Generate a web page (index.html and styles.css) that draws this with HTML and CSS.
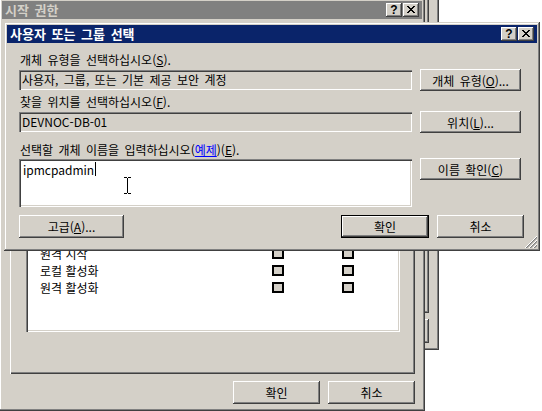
FILE: index.html
```html
<!DOCTYPE html>
<html lang="ko">
<head>
<meta charset="utf-8">
<title>사용자 또는 그룹 선택</title>
<link rel="stylesheet" href="styles.css">
</head>
<body>
<div class="desktop">
  <div class="win win-c">
    <div class="c-part c-top"></div>
    <div class="c-part c-bottom"></div>
  </div>

  <div class="win win-a">
    <div class="titlebar inactive">
      <span class="title">시작 권한</span>
      <div class="tbtns">
        <span class="tbtn help">?</span>
        <span class="tbtn close"><svg width="8" height="7" viewBox="0 0 8 7" shape-rendering="crispEdges"><path d="M0 0h2v1H0zM6 0h2v1H6zM1 1h2v1H1zM5 1h2v1H5zM2 2h4v1H2zM3 3h2v1H3zM2 4h4v1H2zM1 5h2v1H1zM5 5h2v1H5zM0 6h2v1H0zM6 6h2v1H6z" fill="#000"/></svg></span>
      </div>
    </div>
    <div class="a-body">
      <div class="panel">
        <div class="listbox">
          <div class="lrow"><span>원격 시작</span><span class="chk"></span><span class="chk"></span></div>
          <div class="lrow"><span>로컬 활성화</span><span class="chk"></span><span class="chk"></span></div>
          <div class="lrow"><span>원격 활성화</span><span class="chk"></span><span class="chk"></span></div>
        </div>
      </div>
      <div class="a-buttons">
        <button class="btn btn-a">확인</button>
        <button class="btn btn-a">취소</button>
      </div>
    </div>
  </div>

  <div class="win dlg">
    <div class="titlebar active">
      <span class="title">사용자 또는 그룹 선택</span>
      <div class="tbtns">
        <span class="tbtn help">?</span>
        <span class="tbtn close"><svg width="8" height="7" viewBox="0 0 8 7" shape-rendering="crispEdges"><path d="M0 0h2v1H0zM6 0h2v1H6zM1 1h2v1H1zM5 1h2v1H5zM2 2h4v1H2zM3 3h2v1H3zM2 4h4v1H2zM1 5h2v1H1zM5 5h2v1H5zM0 6h2v1H0zM6 6h2v1H6z" fill="#000"/></svg></span>
      </div>
    </div>
    <div class="dlg-body">
      <div class="label l1">개체 유형을 선택하십시오(<u>S</u>).</div>
      <div class="row r1">
        <div class="field ro">사용자, 그룹, 또는 기본 제공 보안 계정</div>
        <button class="btn side">개체 유형(<u>O</u>)...</button>
      </div>
      <div class="label l2">찾을 위치를 선택하십시오(<u>F</u>).</div>
      <div class="row r2">
        <div class="field ro">DEVNOC-DB-01</div>
        <button class="btn side">위치(<u>L</u>)...</button>
      </div>
      <div class="label l3">선택할 개체 이름을 입력하십시오(<a class="link">예제</a>)(<u>E</u>).</div>
      <div class="row r3">
        <div class="field area"><span class="typed">ipmcpadmin</span><span class="caret"></span></div>
        <button class="btn side">이름 확인(<u>C</u>)</button>
      </div>
      <div class="row bottom">
        <button class="btn adv">고급(<u>A</u>)...</button>
        <button class="btn ok default">확인</button>
        <button class="btn cancel">취소</button>
      </div>
    </div>
    <svg class="grip" width="12" height="12" viewBox="0 0 12 12"><path d="M12 1L1 12M12 5L5 12M12 9L9 12" stroke="#808080" stroke-width="1.4"/><path d="M12 0L0 12M12 4L4 12M12 8L8 12" stroke="#fff" stroke-width="1"/></svg>
  </div>

  <svg class="ibeam" width="9" height="17" viewBox="0 0 9 17" shape-rendering="crispEdges"><path d="M1 0h3v1H1zM5 0h3v1H5zM4 1h1v15H4zM1 16h3v1H1zM5 16h3v1H5z" fill="#000"/></svg>
</div>
</body>
</html>
```

FILE: styles.css
```css
* { box-sizing: border-box; }

body {
  margin: 0;
  background: #fff;
  font-family: "Noto Sans CJK KR", "Liberation Sans", sans-serif;
  font-size: 12px;
  color: #000;
}

.desktop {
  position: relative;
  width: 542px;
  height: 411px;
  overflow: hidden;
  background: #fff;
}

.win {
  position: absolute;
  background: #d4d0c8;
  padding: 3px;
  display: flex;
  flex-direction: column;
  box-shadow: inset -1px -1px #404040, inset 1px 1px #d4d0c8,
              inset -2px -2px #808080, inset 2px 2px #fff;
}

/* window peeking at the right */
.win-c {
  left: 395px;
  top: -10px;
  width: 44px;
  height: 360px;
  padding: 3px 10px 3px 3px;
}
.c-part {
  background: #d4d0c8;
  box-shadow: inset -1px -1px #404040, inset 1px 1px #fff, inset -2px -2px #808080;
}
.c-top { height: 320px; }
.c-bottom { height: 24px; margin-top: 6px; }

/* back window */
.win-a {
  left: -1px;
  top: -2px;
  width: 426px;
  height: 413px;
}

.dlg {
  left: 4px;
  top: 22px;
  width: 536px;
  height: 229px;
}

.titlebar {
  height: 18px;
  flex: none;
  display: flex;
  align-items: center;
  padding: 0 3px 0 3px;
}
.titlebar.active { background: #0a246a; color: #fff; }
.titlebar.inactive { background: #808080; color: #d4d0c8; }
.titlebar .title {
  font-weight: bold;
  font-size: 13px;
  line-height: 18px;
  word-spacing: 2px;
}
.tbtns {
  margin-left: auto;
  display: flex;
  gap: 1px;
}
.tbtn {
  width: 16px;
  height: 14px;
  background: #d4d0c8;
  display: flex;
  align-items: center;
  justify-content: center;
  color: #000;
  box-shadow: inset -1px -1px #404040, inset 1px 1px #fff,
              inset -2px -2px #808080;
}
.tbtn.help {
  font-family: "Liberation Sans", sans-serif;
  font-weight: bold;
  font-size: 12px;
  line-height: 14px;
  padding-bottom: 1px;
}
.tbtn.close svg { display: block; margin-top: -1px; }

/* back window body */
.a-body {
  flex: 1;
  display: flex;
  flex-direction: column;
  padding: 11px 7px 0 8px;
}
.panel {
  width: 405px;
  height: 344px;
  padding: 166px 0 0 16px;
  box-shadow: inset 1px 1px #fff, inset -1px -1px #404040, inset -2px -2px #808080;
}
.listbox {
  width: 374px;
  height: 136px;
  background: #fff;
  padding: 49px 0 0 14px;
  box-shadow: inset 1px 1px #808080, inset 2px 2px #404040,
              inset -1px -1px #fff, inset -2px -2px #d4d0c8;
}
.lrow {
  display: grid;
  grid-template-columns: 232px 70px 1fr;
  height: 17px;
  align-items: center;
  line-height: 17px;
}
.chk {
  width: 12px;
  height: 11px;
  background: #d4d0c8;
  border: 2px solid #000;
}
.a-buttons {
  display: flex;
  justify-content: flex-end;
  gap: 8px;
  margin-top: 7px;
}
.btn-a { width: 87px; }

/* buttons */
.btn {
  height: 23px;
  border: none;
  padding: 0;
  margin: 0;
  background: #d4d0c8;
  color: #000;
  font: inherit;
  font-size: 12px;
  word-spacing: 2px;
  box-shadow: inset -1px -1px #404040, inset 1px 1px #fff,
              inset -2px -2px #808080, inset 2px 2px #d4d0c8;
}
.btn.default {
  box-shadow: inset 0 0 0 1px #000, inset -2px -2px #404040, inset 2px 2px #fff,
              inset -3px -3px #808080;
}

/* dialog body */
.dlg-body {
  flex: 1;
  display: flex;
  flex-direction: column;
  padding: 0 16px 0 12px;
}
.label {
  line-height: 16px;
  height: 16px;
  padding-left: 1px;
  word-spacing: 2px;
  white-space: nowrap;
}
.l1 { margin-top: 9px; }
.l2 { margin-top: 3px; }
.l3 { margin-top: 9px; }
.link { color: #0000ff; text-decoration: underline; }

.row {
  display: flex;
  gap: 8px;
  align-items: center;
}
.r1, .r2 { margin-top: 1px; height: 22px; }
.r3 { align-items: flex-start; }

.field {
  width: 393px;
  height: 20px;
  line-height: 20px;
  padding: 0 3px;
  white-space: nowrap;
  word-spacing: 2px;
  box-shadow: inset 1px 1px #808080, inset 2px 2px #404040,
              inset -1px -1px #fff, inset -2px -2px #d4d0c8;
}
.field.ro { background: #d4d0c8; }
.field.area {
  background: #fff;
  height: 48px;
  margin-top: 1px;
  padding: 3px 4px;
  line-height: 15px;
  display: flex;
  align-items: flex-start;
}
.caret {
  display: inline-block;
  width: 1px;
  height: 14px;
  background: #000;
  margin-left: 1px;
}
.side { width: 101px; height: 22px; }

.bottom { margin-top: 8px; gap: 8px; margin-right: -3px; }
.adv { width: 105px; }
.ok { width: 88px; margin-left: auto; }
.cancel { width: 87px; }

.grip {
  position: absolute;
  right: 3px;
  bottom: 3px;
}

.ibeam {
  position: absolute;
  left: 123px;
  top: 177px;
}
```
